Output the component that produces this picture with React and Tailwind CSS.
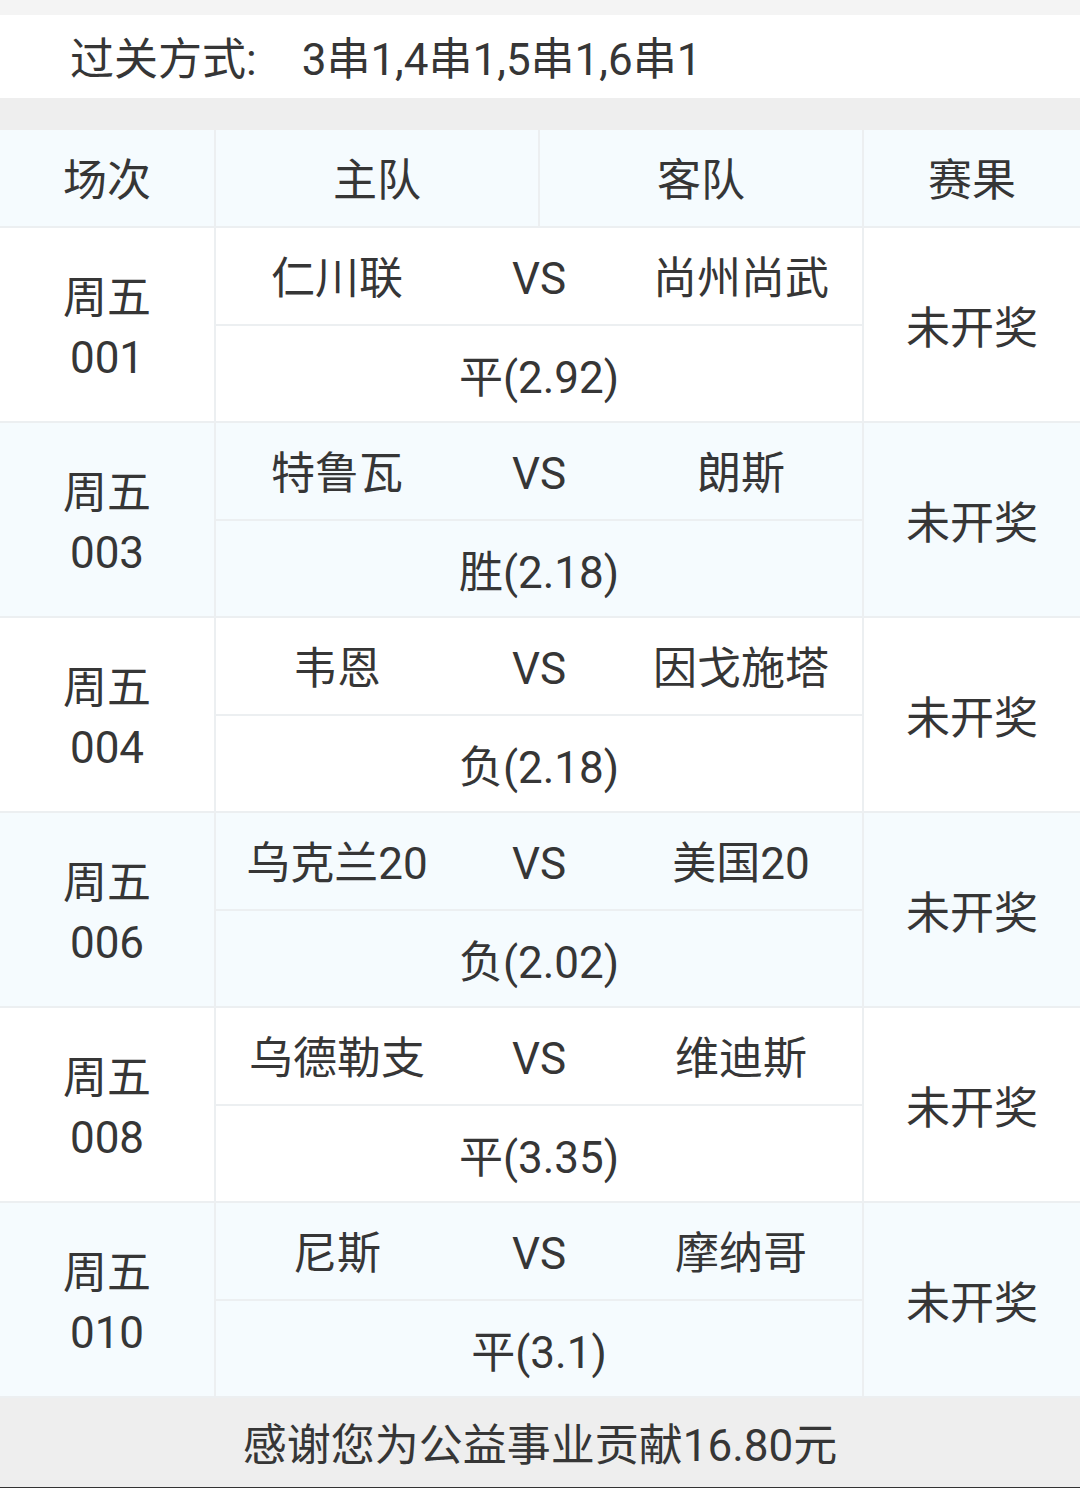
import React from "react";

const rows = [
  { no: "001", home: "仁川联", away: "尚州尚武", pick: "平(2.92)", blue: false },
  { no: "003", home: "特鲁瓦", away: "朗斯", pick: "胜(2.18)", blue: true },
  { no: "004", home: "韦恩", away: "因戈施塔", pick: "负(2.18)", blue: false },
  { no: "006", home: "乌克兰20", away: "美国20", pick: "负(2.02)", blue: true },
  { no: "008", home: "乌德勒支", away: "维迪斯", pick: "平(3.35)", blue: false },
  { no: "010", home: "尼斯", away: "摩纳哥", pick: "平(3.1)", blue: true },
];

export default function App() {
  return (
    <div
      className="w-[1080px] h-[1488px] bg-white text-[#363636] text-[44px] font-normal overflow-hidden flex flex-col"
      style={{ fontFamily: 'Roboto, "Noto Sans CJK SC", sans-serif' }}
    >
      <div className="h-[15px] bg-[#f4f4f4]" />
      <div className="h-[83px] bg-white flex items-center pl-[70px] pt-[6px]">
        <span>过关方式:</span>
        <span className="ml-[45px]">3串1,4串1,5串1,6串1</span>
      </div>
      <div className="h-[32px] bg-[#eeeeee]" />

      {/* header */}
      <div className="flex h-[98px] bg-[#f5fbfe] border-b-2 border-[#eceff1]">
        <div className="w-[216px] border-r-2 border-[#eceff1] flex items-center justify-center pt-[6px]">场次</div>
        <div className="w-[324px] border-r-2 border-[#eceff1] flex items-center justify-center pt-[6px]">主队</div>
        <div className="w-[324px] border-r-2 border-[#eceff1] flex items-center justify-center pt-[6px]">客队</div>
        <div className="flex-1 flex items-center justify-center pt-[6px]">赛果</div>
      </div>

      {rows.map((r) => (
        <div
          key={r.no}
          className={`flex h-[195px] border-b-2 border-[#eceff1] ${r.blue ? "bg-[#f5fbfe]" : "bg-white"}`}
        >
          <div className="w-[216px] border-r-2 border-[#eceff1] flex flex-col items-center justify-center leading-[60px] pt-[6px]">
            <span>周五</span>
            <span>{r.no}</span>
          </div>
          <div className="w-[648px] border-r-2 border-[#eceff1] flex flex-col">
            <div className="h-[98px] border-b-2 border-[#eceff1] grid grid-cols-[242px_162px_242px] items-center pt-[6px]">
              <span className="text-center whitespace-nowrap">{r.home}</span>
              <span className="text-center">VS</span>
              <span className="text-center whitespace-nowrap">{r.away}</span>
            </div>
            <div className="flex-1 flex items-center justify-center pt-[8px]">{r.pick}</div>
          </div>
          <div className="flex-1 flex items-center justify-center pt-[8px]">未开奖</div>
        </div>
      ))}

      <div className="flex-1 bg-[#eeeeee] flex items-center justify-center pt-[6px]">
        感谢您为公益事业贡献16.80元
      </div>
      <div className="h-[1px] bg-[#333333]" />
    </div>
  );
}
